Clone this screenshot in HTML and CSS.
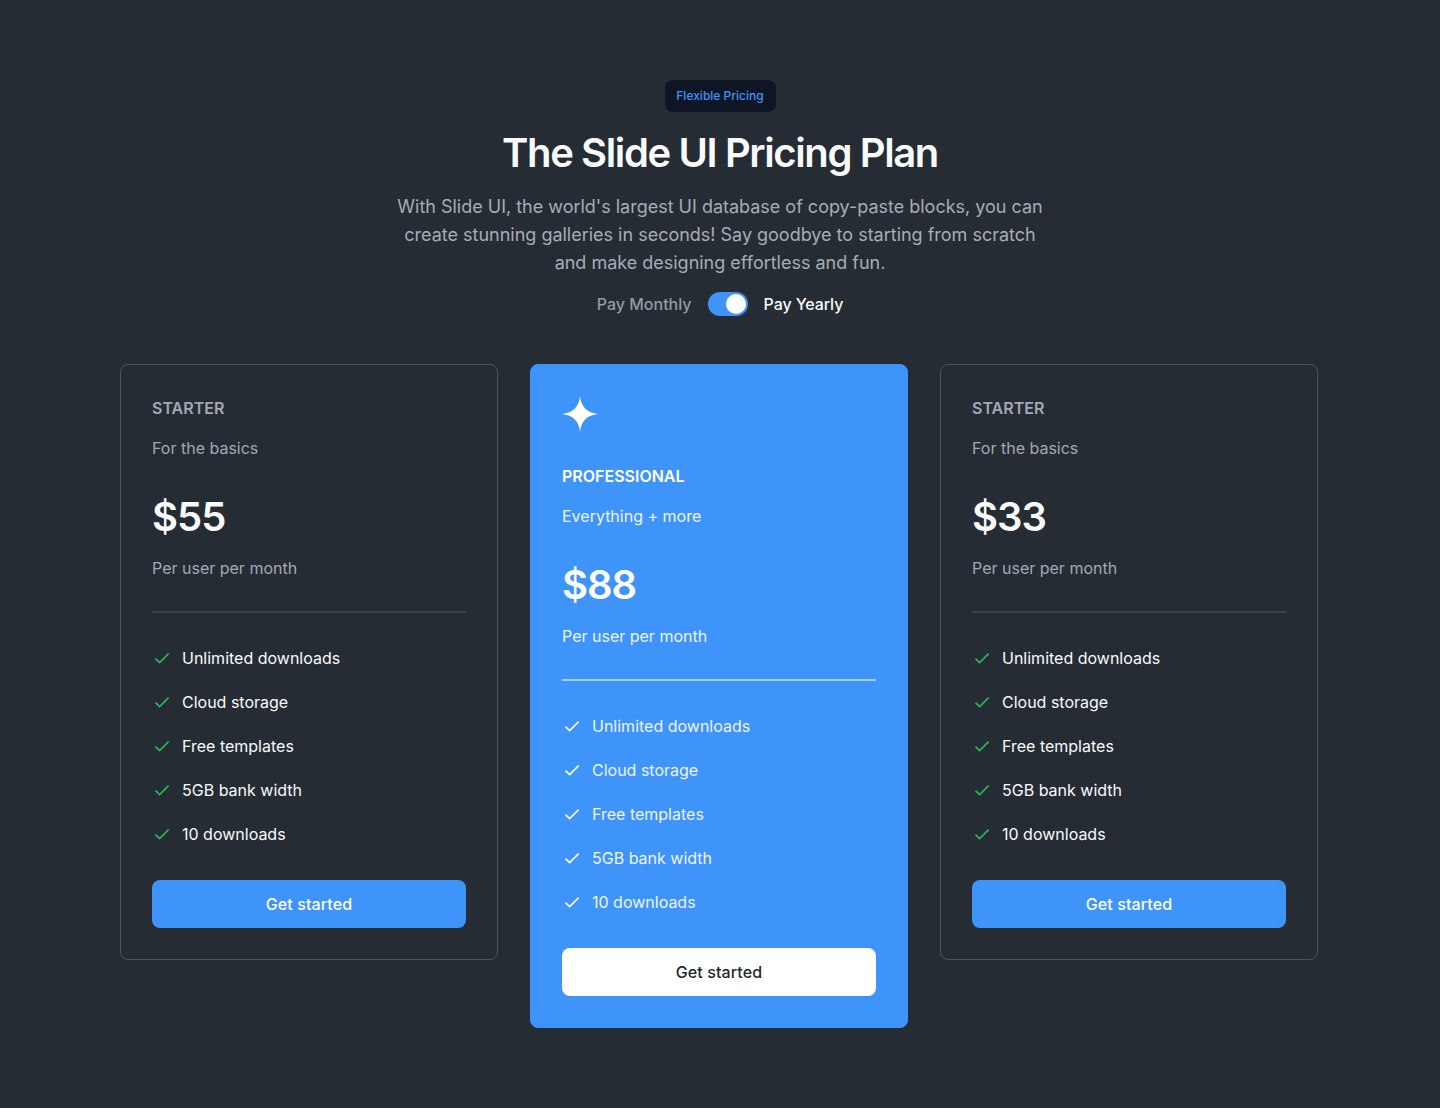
FILE: index.html
```html
<!DOCTYPE html>
<html lang="en">
<head>
<meta charset="utf-8">
<title>The Slide UI Pricing Plan</title>
<link rel="stylesheet" href="styles.css">
</head>
<body>
<svg width="0" height="0" class="defs" aria-hidden="true">
  <symbol id="check" viewBox="0 0 20 20"><path d="M3.5 10.6 7.6 14.6 16.6 5.6" fill="none" stroke="currentColor" stroke-width="1.6"/></symbol>
</svg>
<main class="pricing">
  <header class="intro">
    <span class="badge">Flexible Pricing</span>
    <h1 class="title">The Slide UI Pricing Plan</h1>
    <p class="lead">With Slide UI, the world's largest UI database of copy-paste blocks, you can<br>create stunning galleries in seconds! Say goodbye to starting from scratch<br>and make designing effortless and fun.</p>
    <div class="billing">
      <span class="monthly">Pay Monthly</span>
      <span class="switch"><span class="knob"></span></span>
      <span class="yearly">Pay Yearly</span>
    </div>
  </header>
  <div class="plans">
    <section class="plan">
      <h2 class="name">STARTER</h2>
      <p class="desc">For the basics</p>
      <p class="price">$55</p>
      <p class="period">Per user per month</p>
      <hr class="rule">
      <ul class="features">
        <li><svg class="check"><use href="#check"/></svg><span>Unlimited downloads</span></li>
        <li><svg class="check"><use href="#check"/></svg><span>Cloud storage</span></li>
        <li><svg class="check"><use href="#check"/></svg><span>Free templates</span></li>
        <li><svg class="check"><use href="#check"/></svg><span>5GB bank width</span></li>
        <li><svg class="check"><use href="#check"/></svg><span>10 downloads</span></li>
      </ul>
      <button class="button">Get started</button>
    </section>
    <section class="plan featured">
      <svg class="star" viewBox="0 0 36 36"><path d="M18 0Q19.6 16.4 36 18Q19.6 19.6 18 36Q16.4 19.6 0 18Q16.4 16.4 18 0Z" fill="currentColor"/></svg>
      <h2 class="name">PROFESSIONAL</h2>
      <p class="desc">Everything + more</p>
      <p class="price">$88</p>
      <p class="period">Per user per month</p>
      <hr class="rule">
      <ul class="features">
        <li><svg class="check"><use href="#check"/></svg><span>Unlimited downloads</span></li>
        <li><svg class="check"><use href="#check"/></svg><span>Cloud storage</span></li>
        <li><svg class="check"><use href="#check"/></svg><span>Free templates</span></li>
        <li><svg class="check"><use href="#check"/></svg><span>5GB bank width</span></li>
        <li><svg class="check"><use href="#check"/></svg><span>10 downloads</span></li>
      </ul>
      <button class="button">Get started</button>
    </section>
    <section class="plan">
      <h2 class="name">STARTER</h2>
      <p class="desc">For the basics</p>
      <p class="price">$33</p>
      <p class="period">Per user per month</p>
      <hr class="rule">
      <ul class="features">
        <li><svg class="check"><use href="#check"/></svg><span>Unlimited downloads</span></li>
        <li><svg class="check"><use href="#check"/></svg><span>Cloud storage</span></li>
        <li><svg class="check"><use href="#check"/></svg><span>Free templates</span></li>
        <li><svg class="check"><use href="#check"/></svg><span>5GB bank width</span></li>
        <li><svg class="check"><use href="#check"/></svg><span>10 downloads</span></li>
      </ul>
      <button class="button">Get started</button>
    </section>
  </div>
</main>
</body>
</html>
```
FILE: styles.css
```css
* { box-sizing: border-box; margin: 0; padding: 0; }
body {
  background: #252c33;
  color: #f9fafb;
  font: 400 16px/24px Inter, sans-serif;
}
.defs { display: block; }
.pricing { padding: 80px 120px; min-height: 1108px; }
.intro { display: flex; flex-direction: column; align-items: center; text-align: center; }
.badge {
  width: 111px;
  height: 32px;
  border-radius: 8px;
  background: #0e1625;
  color: #3f94f9;
  font-size: 12px;
  font-weight: 500;
  line-height: 32px;
}
.title {
  margin-top: 16px;
  font-size: 40px;
  font-weight: 600;
  line-height: 50px;
  letter-spacing: -1.38px;
  white-space: nowrap;
}
.lead { margin-top: 15px; color: #a7adb6; font-size: 18px; line-height: 28px; letter-spacing: -0.01px; white-space: nowrap; }
.billing { display: flex; align-items: center; gap: 16px; margin-top: 15px; font-weight: 500; }
.monthly { color: #949ba5; }
.yearly { letter-spacing: -0.1px; }
.switch { display: flex; justify-content: flex-end; width: 40px; height: 24px; padding: 2px; border-radius: 12px; background: #3f94f9; }
.knob { width: 20px; height: 20px; border-radius: 50%; background: #fff; }
.plans { display: grid; grid-template-columns: repeat(3, 378px); align-items: start; gap: 32px; margin-top: 48px; }
.plan { padding: 31px; border: 1px solid #4b545f; border-radius: 8px; }
.name { color: #a3a9b3; font-size: 16px; font-weight: 600; line-height: 24px; }
.desc { margin-top: 16px; color: #a3a9b3; }
.price { margin-top: 32px; font-size: 40px; font-weight: 600; line-height: 50px; letter-spacing: -1px; }
.period { margin-top: 14px; color: #a3a9b3; }
.rule { height: 2px; margin-top: 31px; border: 0; background: #39414a; }
.features { display: grid; gap: 20px; margin-top: 33px; list-style: none; }
.features li { display: flex; align-items: center; gap: 10px; }
.check { flex: none; width: 20px; height: 20px; color: #2bb956; }
.button {
  display: block;
  width: 100%;
  height: 48px;
  margin-top: 34px;
  border: 0;
  border-radius: 8px;
  background: #3f94f9;
  color: #fff;
  font: inherit;
  font-weight: 500;
  letter-spacing: 0.1px;
}
.featured { border-color: #3f94f9; background: #3f94f9; }
.featured .name, .featured .price, .featured .check { color: #fff; }
.featured .desc, .featured .period, .featured .features { color: #edf5ff; }
.featured .rule { background: #a5cdfc; }
.featured .button { background: #fff; color: #20272e; }
.star { display: block; width: 36px; height: 36px; margin-bottom: 32px; color: #fff; }
```
